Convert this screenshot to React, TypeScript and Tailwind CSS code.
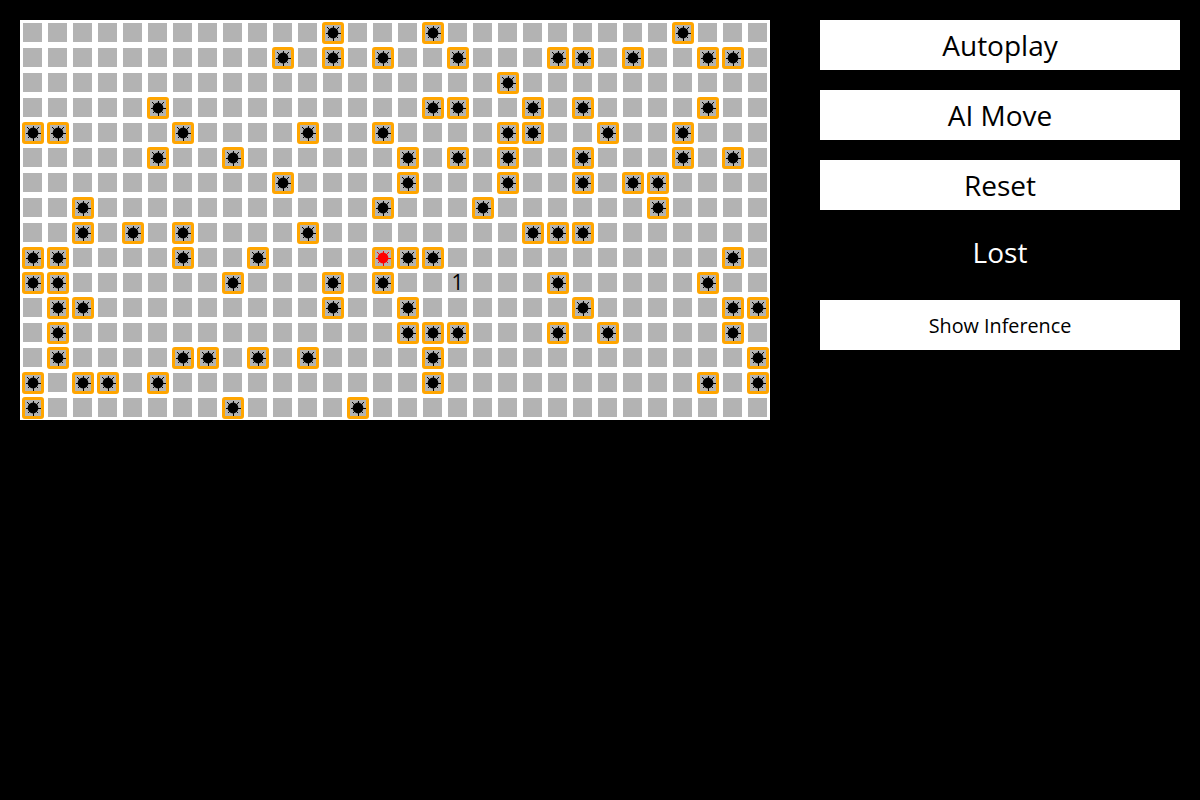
const MINES: number[][] = [
  [12, 16, 26],
  [10, 12, 14, 17, 21, 22, 24, 27, 28],
  [19],
  [5, 16, 17, 20, 22, 27],
  [0, 1, 6, 11, 14, 19, 20, 23, 26],
  [5, 8, 15, 17, 19, 22, 26, 28],
  [10, 15, 19, 22, 24, 25],
  [2, 14, 18, 25],
  [2, 4, 6, 11, 20, 21, 22],
  [0, 1, 6, 9, 14, 15, 16, 28],
  [0, 1, 8, 12, 14, 21, 27],
  [1, 2, 12, 15, 22, 28, 29],
  [1, 15, 16, 17, 21, 23, 28],
  [1, 6, 7, 9, 11, 16, 29],
  [0, 2, 3, 5, 16, 27, 29],
  [0, 8, 13],
];

function Mine({ color }: { color: string }) {
  return (
    <svg width="16" height="16" viewBox="0 0 16 16" className="block">
      <g stroke={color} strokeWidth="1" shapeRendering="crispEdges">
        <line x1="8" y1="0.5" x2="8" y2="15.5" />
        <line x1="0.5" y1="8" x2="15.5" y2="8" />
        <line x1="2.5" y1="2.5" x2="13.5" y2="13.5" />
        <line x1="13.5" y1="2.5" x2="2.5" y2="13.5" />
      </g>
      <circle cx="8" cy="8" r="5.4" fill={color} />
    </svg>
  );
}

function Cell({ r, c }: { r: number; c: number }) {
  const mine = MINES[r].includes(c);
  const lost = r === 9 && c === 14;
  const one = r === 10 && c === 17;
  return (
    <div className="flex h-[25px] w-[25px] items-start justify-start">
      {mine ? (
        <div className="ml-[2px] mt-[2px] h-[22px] w-[22px] rounded-[3px] border-[3px] border-[#ffa500] bg-[#b3b3b3]">
          <Mine color={lost ? "#ff0000" : "#000000"} />
        </div>
      ) : (
        <div className="ml-[3px] mt-[3px] flex h-[19px] w-[19px] items-center justify-center bg-[#b3b3b3] text-[21px] leading-none text-black">
          {one ? "1" : ""}
        </div>
      )}
    </div>
  );
}

function Btn({ label, small }: { label: string; small?: boolean }) {
  return (
    <button className={`h-[50px] w-full bg-white text-black ${small ? "pt-px text-[19.8px]" : "text-[28px]"}`}>
      {label}
    </button>
  );
}

export default function App() {
  return (
    <div className="flex h-[800px] w-[1200px] items-start gap-[50px] bg-black p-5 font-['Open_Sans',sans-serif]">
      <div className="grid grid-cols-[repeat(30,25px)] bg-white">
        {MINES.map((_, r) =>
          Array.from({ length: 30 }, (_, c) => <Cell key={`${r}-${c}`} r={r} c={c} />)
        )}
      </div>
      <div className="flex w-[360px] flex-col gap-5">
        <Btn label="Autoplay" />
        <Btn label="AI Move" />
        <Btn label="Reset" />
        <div className="flex h-[50px] items-center justify-center pb-[6px] text-[28px] text-white">Lost</div>
        <Btn label="Show Inference" small />
      </div>
    </div>
  );
}
